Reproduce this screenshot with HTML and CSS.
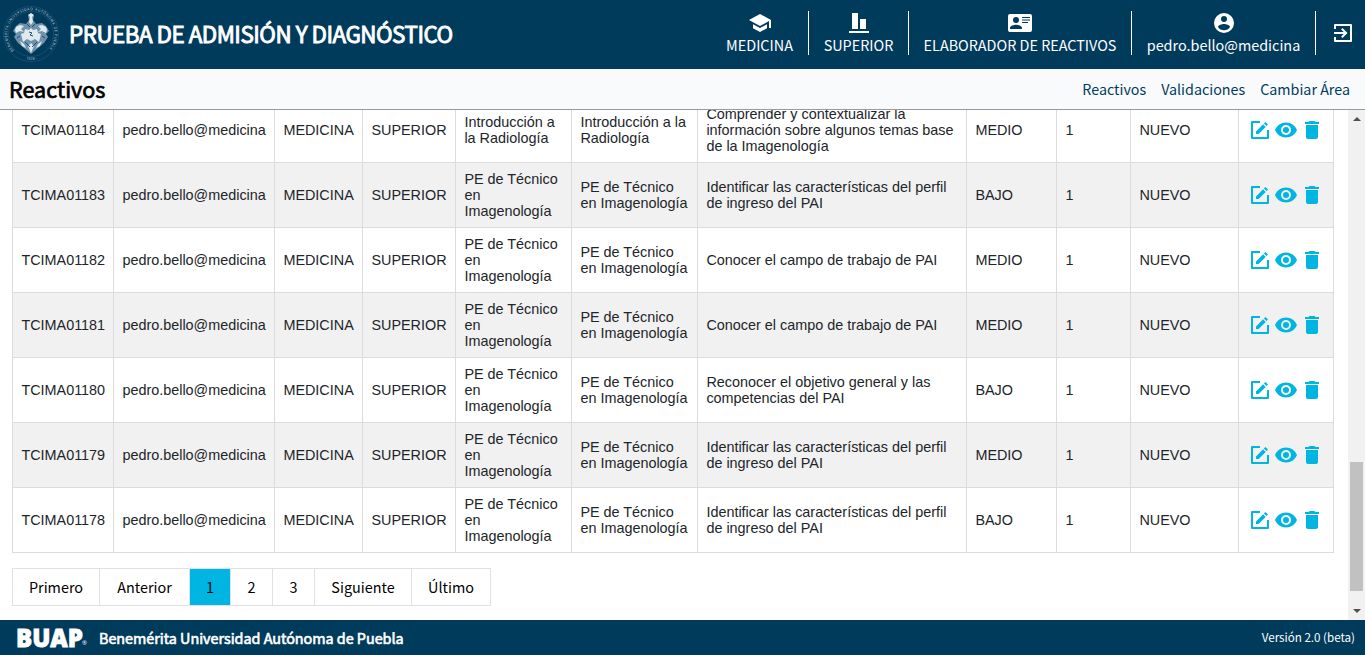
FILE: index.html
```html
<!DOCTYPE html>
<html lang="es">
<head>
<meta charset="utf-8">
<title>Prueba de Admisión y Diagnóstico</title>
<link rel="stylesheet" href="styles.css">
</head>
<body>
<svg class="sprite" aria-hidden="true">
  <symbol id="edit" viewBox="0 0 24 24"><path d="M4 3h8v2H5v14h14v-7h2v8a1 1 0 0 1-1 1H4a1 1 0 0 1-1-1V4a1 1 0 0 1 1-1zM8 13.400V16h2.600l7.100-7.100-2.600-2.600zM20 6.500 17.500 4l-1.600 1.500 2.600 2.600z"/></symbol>
  <symbol id="eye" viewBox="0 0 24 24"><path d="M12 4.500C7 4.500 2.730 7.610 1 12c1.730 4.390 6 7.500 11 7.500s9.270-3.110 11-7.500c-1.730-4.390-6-7.500-11-7.500zM12 17a5 5 0 1 1 0-10 5 5 0 0 1 0 10zm0-8a3 3 0 1 0 0 6 3 3 0 0 0 0-6z"/></symbol>
  <symbol id="trash" viewBox="0 0 24 24"><path d="M6 19c0 1.100.9 2 2 2h8c1.100 0 2-.9 2-2V7H6zM19 4h-3.500l-1-1h-5l-1 1H5v2h14z"/></symbol>
</svg>
<header class="topbar">
  <svg class="seal" viewBox="0 0 56 56">
    <defs><path id="ring" d="M11 44.500A23.700 23.700 0 1 1 45 44.500"/><path id="ring-low" d="M16 51A26 26 0 0 0 40 51"/></defs>
    <circle class="seal-line" cx="28" cy="28" r="27.500"/>
    <circle class="seal-line" cx="28" cy="28" r="22.500"/>
    <text class="seal-text"><textPath href="#ring" textLength="108">BENEMÉRITA UNIVERSIDAD AUTÓNOMA DE PUEBLA</textPath></text>
    <text class="seal-text"><textPath href="#ring-low" startOffset="6">· 1578 ·</textPath></text>
    <path class="seal-mid" d="M28 7l3 3-1 4 3 4 6-1 4 3 3 5-3 3 2 3-4 6-6 5-7 6-7-6-6-5-4-6 2-3-3-3 3-5 4-3 6 1 3-4-1-4z"/>
    <path class="seal-light" d="M28 7l3 2-2 2 1 5-2 3-2-3 1-5-2-2zM13 21l4-2 4 1-3 3 3 3-4-1-4 2-1-3zM43 21l-4-2-4 1 3 3-3 3 4-1 4 2 1-3zM28 22l2 2 4-1 1 4 3 1-2 8-4-3-4 2-4-2-4 3-2-8 3-1 1-4 4 1zM17 35l4 3 2 4-4-2zM39 35l-4 3-2 4 4-2zM28 37l3 3-3 7-3-7z"/>
    <path class="seal-dark" d="M24 18l3 3M32 18l-3 3M22 36l5 5M34 36l-5 5M17 30l-3 2M39 30l3 2M26 26l3 1-2 2 3 1"/>
  </svg>
  <h1 class="brand">PRUEBA DE ADMISIÓN Y DIAGNÓSTICO</h1>
  <nav class="session">
    <div class="item medicina"><svg viewBox="0 0 24 24"><path d="M5 13.180v4L12 21l7-3.820v-4L12 17zM12 3 1 9l11 6 9-4.910V17h2V9z"/></svg><span>MEDICINA</span></div>
    <div class="item superior"><svg viewBox="0 0 24 24"><path d="M2 20h20v2H2zM5 2h6v16H5zM13 8h6v10h-6z"/></svg><span>SUPERIOR</span></div>
    <div class="item elaborador"><svg class="wide" viewBox="0 0 26 24"><path fill-rule="evenodd" d="M3 3h20a2 2 0 0 1 2 2v14a2 2 0 0 1-2 2H3a2 2 0 0 1-2-2V5a2 2 0 0 1 2-2zm6 3a3 3 0 1 0 0 6 3 3 0 0 0 0-6zm6 0v1h8V6zm0 2.500v1h8v-1zm0 2.500v1h6v-1zM3 18h12v-1c0-2-4-3.200-6-3.200S3 15 3 17z"/></svg><span>ELABORADOR DE REACTIVOS</span></div>
    <div class="item usuario"><svg viewBox="0 0 24 24"><path d="M12 2a10 10 0 1 0 0 20 10 10 0 0 0 0-20zm0 3a3 3 0 1 1 0 6 3 3 0 0 1 0-6zm0 14.200a7.200 7.200 0 0 1-6-3.220c.03-1.990 4-3.080 6-3.080s5.970 1.090 6 3.080a7.200 7.200 0 0 1-6 3.220z"/></svg><span>pedro.bello@medicina</span></div>
    <div class="exit"><svg viewBox="0 0 24 24"><path d="M4 3h16a1 1 0 0 1 1 1v16a1 1 0 0 1-1 1H4a1 1 0 0 1-1-1v-4h2v3h14V5H5v3H3V4a1 1 0 0 1 1-1zM10.100 15.600 11.500 17l5-5-5-5-1.400 1.400L12.700 11H3v2h9.700z"/></svg></div>
  </nav>
</header>
<div class="subbar">
  <h2 class="title">Reactivos</h2>
  <nav class="links"><a>Reactivos</a><a>Validaciones</a><a>Cambiar Área</a></nav>
</div>
<main class="main">
  <section class="content">
    <table class="grid">
      <colgroup><col class="c1"><col class="c2"><col class="c3"><col class="c4"><col class="c5"><col class="c6"><col class="c7"><col class="c8"><col class="c9"><col class="c10"><col class="c11"></colgroup>
      <tbody id="rows"></tbody>
    </table>
    <ul class="pages"><li class="p1">Primero</li><li class="p2">Anterior</li><li class="p3 active">1</li><li class="p4">2</li><li class="p5">3</li><li class="p6">Siguiente</li><li class="p7">Último</li></ul>
  </section>
  <div class="scroll"><i class="up"></i><i class="thumb"></i><i class="down"></i></div>
</main>
<footer class="footer">
  <div class="buap"><b>BUAP</b><small>®</small></div>
  <span class="univ">Benemérita Universidad Autónoma de Puebla</span>
  <span class="version">Versión 2.0 (beta)</span>
</footer>
<script src="rows.js"></script>
</body>
</html>
```
FILE: styles.css
```css
* { box-sizing: border-box; }
body {
  margin: 0;
  width: 1365px;
  height: 655px;
  overflow: hidden;
  display: flex;
  flex-direction: column;
  background: #fff;
  color: #000;
  font-family: "Noto Sans CJK SC", "Noto Sans", sans-serif;
}
.sprite { display: none; }
h1, h2 { margin: 0; white-space: nowrap; }

.topbar {
  height: 69px;
  flex: none;
  display: flex;
  align-items: center;
  background: #003b5c;
  color: #fff;
}
.seal { width: 56px; height: 56px; margin: 0 10px 2px 3px; flex: none; }
.seal-line { fill: none; stroke: #2f5f7d; stroke-width: .5; }
.seal-text { font: 3.600px "Noto Sans", sans-serif; fill: #b5c8d4; }
.seal-mid { fill: #6f92aa; }
.seal-light { fill: #dfe9ef; }
.seal-dark { fill: none; stroke: #1c5070; stroke-width: 1; }
.brand {
  font-size: 22.400px;
  line-height: 36px;
  font-weight: 400;
  letter-spacing: -.5px;
  margin-bottom: 4px;
  -webkit-text-stroke: .9px #fff;
}

.session { display: flex; margin: 0 0 4px auto; height: 44px; font-size: 14.400px; }
.item {
  display: flex;
  flex-direction: column;
  align-items: center;
  border-right: 1px solid #fff;
  white-space: nowrap;
}
.item svg { width: 24px; height: 24px; fill: #fff; flex: none; }
.item svg.wide { width: 26px; }
.item span { line-height: 19px; }
.medicina { width: 98px; }
.superior { width: 100px; }
.elaborador { width: 223px; }
.usuario { width: 184px; }
.exit { width: 49px; padding: 10px 0 0 15px; }
.exit svg { width: 24px; height: 24px; fill: #fff; display: block; }

.subbar {
  height: 41px;
  flex: none;
  display: flex;
  align-items: center;
  justify-content: space-between;
  padding: 0 15px 0 9px;
  background: #f9fafc;
  border-bottom: 1px solid #999;
}
.title { font-size: 21.600px; font-weight: 400; line-height: 38px; -webkit-text-stroke: .7px #000; }
.links { display: flex; gap: 15px; padding-bottom: 2px; font-size: 14.300px; color: #003b5c; }

.main { height: 510px; flex: none; display: flex; overflow: hidden; }
.content { flex: 1; padding-left: 12px; }
.grid {
  width: 1322px;
  margin-top: -12px;
  table-layout: fixed;
  border-collapse: separate;
  border-spacing: 0;
  border-left: 1px solid #dcdcdc;
  font: 14.400px/16px "Liberation Sans", Arial, sans-serif;
  color: #212529;
}
.grid td {
  height: 65px;
  padding: 0 7.600px 0 8.400px;
  vertical-align: middle;
  border-right: 1px solid #dcdcdc;
  border-bottom: 1px solid #dcdcdc;
}
.grid tr { height: 65px; }
.grid tr:nth-child(even) { background: #f1f1f1; }
.grid td:last-child { padding-left: 9px; }
.c1 { width: 101px; }
.c2 { width: 161px; }
.c3 { width: 88px; }
.c4 { width: 93px; }
.c5 { width: 116px; }
.c6 { width: 126px; }
.c7 { width: 269px; }
.c8 { width: 90px; }
.c9 { width: 74px; }
.c10 { width: 108px; }
.c11 { width: 95px; }
.actions { display: flex; gap: 2px; }
.actions svg { width: 24px; height: 24px; fill: #00b5e2; }

.pages { display: flex; margin: 15px 0 0; padding: 0; list-style: none; font-size: 14.400px; }
.pages li {
  height: 38px;
  line-height: 35px;
  text-align: center;
  border: 1px solid #dee2e6;
  border-left-width: 0;
}
.pages .p1 { width: 88px; border-left-width: 1px; }
.pages .p2 { width: 90px; }
.pages .p3 { width: 41px; }
.pages .p4 { width: 42px; }
.pages .p5 { width: 42px; }
.pages .p6 { width: 97px; }
.pages .p7 { width: 79px; }
.pages .active { background: #00b5e2; }

.scroll { width: 17px; background: #f1f1f1; display: flex; flex-direction: column; align-items: center; }
.scroll i { display: block; }
.up, .down { border: 4px solid transparent; }
.up { margin-top: 3px; border-bottom-color: #505050; }
.thumb { width: 13px; height: 129px; margin: 341px 0 0; background: #c1c1c1; }
.down { margin-top: 18px; border-top-color: #505050; }

.footer {
  height: 35px;
  flex: none;
  display: flex;
  align-items: center;
  padding: 0 10px 0 16px;
  background: #003b5c;
  color: #fff;
  white-space: nowrap;
}
.buap { width: 83px; display: flex; align-items: flex-end; line-height: 24px; font-family: "Open Sans", sans-serif; }
.buap b { font-size: 24px; font-weight: 800; letter-spacing: 0; -webkit-text-stroke: .8px #fff; }
.buap small { font-size: 6px; line-height: 14px; margin-left: -1px; }
.univ { font-size: 14.400px; font-weight: 400; letter-spacing: -.03px; -webkit-text-stroke: .6px #fff; }
.version { margin-left: auto; padding-bottom: 2px; font-size: 11.600px; }
```
FILE: rows.js
```js
const pe = "PE de Técnico en Imagenología";
const perfil = "Identificar las características del perfil de ingreso del PAI";
const campo = "Conocer el campo de trabajo de PAI";
const data = [
  ["TCIMA01184", "Introducción a la Radiología", "Comprender y contextualizar la información sobre algunos temas base de la Imagenología", "MEDIO"],
  ["TCIMA01183", pe, perfil, "BAJO"],
  ["TCIMA01182", pe, campo, "MEDIO"],
  ["TCIMA01181", pe, campo, "MEDIO"],
  ["TCIMA01180", pe, "Reconocer el objetivo general y las competencias del PAI", "BAJO"],
  ["TCIMA01179", pe, perfil, "MEDIO"],
  ["TCIMA01178", pe, perfil, "BAJO"]
];
const icons = ["edit", "eye", "trash"].map(n => `<svg><use href="#${n}"/></svg>`).join("");
document.getElementById("rows").innerHTML = data.map(([id, topic, goal, level]) =>
  "<tr>" + [id, "pedro.bello@medicina", "MEDICINA", "SUPERIOR", topic, topic, goal, level, "1", "NUEVO",
    `<div class="actions">${icons}</div>`].map(c => `<td>${c}</td>`).join("") + "</tr>").join("");
```
